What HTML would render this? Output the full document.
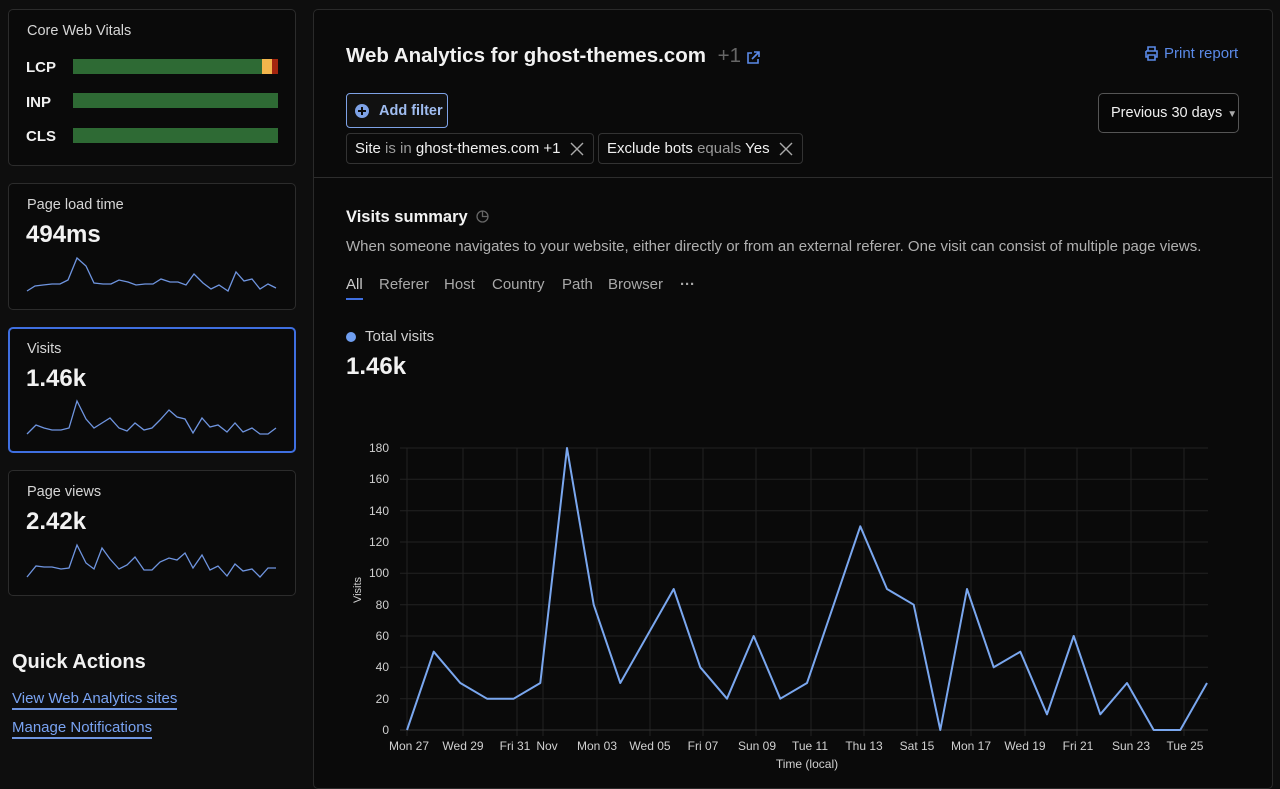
<!DOCTYPE html>
<html><head><meta charset="utf-8"><style>
*{box-sizing:border-box;margin:0;padding:0}
body{width:1280px;height:777px;background:#0e0e0e;font-family:"Liberation Sans",sans-serif;color:#e8e8e8;position:relative;overflow:hidden}
.card{position:absolute;left:8px;width:288px;background:#0a0a0a;border:1px solid #2c2c2c;border-radius:5px}
.lbl{position:absolute;left:18px;font-size:14.5px;color:#d6d6d6}
.big{position:absolute;left:17px;font-size:24px;font-weight:bold;color:#f2f2f2}
.cwv{position:absolute;left:17px;font-size:15px;font-weight:bold;color:#f0f0f0}
.bar{position:absolute;left:64px;width:205px;height:15px;background:#2e6a34}
a{color:#79a3f2;text-decoration:none;border-bottom:2px solid #6f95e0;position:absolute;left:12px;font-size:15px;line-height:18px}
.main{position:absolute;left:313px;top:9px;width:960px;height:780px;background:#0a0a0a;border:1px solid #2a2a2a;border-radius:5px}
.chip{position:absolute;top:133px;height:31px;border:1px solid #333;border-radius:4px;font-size:15px;line-height:30px;padding-left:8px;color:#f0f0f0}
.chip i{font-style:normal;color:#9a9a9a}
.chip svg{position:absolute;top:8px}
.tab{position:absolute;top:276px;font-size:15px;color:#a9a9a9}
</style></head><body>

<div class="card" style="top:9px;height:157px">
 <div class="lbl" style="top:13px">Core Web Vitals</div>
 <div class="cwv" style="top:49px">LCP</div><div class="bar" style="top:49px"><div style="position:absolute;left:189px;width:10px;height:15px;background:#f2b54c"></div><div style="position:absolute;left:199px;width:6px;height:15px;background:#a3250f"></div></div>
 <div class="cwv" style="top:84px">INP</div><div class="bar" style="top:83px"></div>
 <div class="cwv" style="top:118px">CLS</div><div class="bar" style="top:118px"></div>
</div>

<div class="card" style="top:183px;height:127px">
 <div class="lbl" style="top:13px">Page load time</div>
 <div class="big" style="top:37px">494ms</div>
</div>
<div class="card" style="top:327px;height:126px;border:2px solid #3f6fe0">
 <div class="lbl" style="top:12px;left:17px">Visits</div>
 <div class="big" style="top:36px;left:16px">1.46k</div>
</div>
<div class="card" style="top:470px;height:126px">
 <div class="lbl" style="top:13px">Page views</div>
 <div class="big" style="top:37px">2.42k</div>
</div>

<svg style="position:absolute;left:0;top:0" width="310" height="610">
<g fill="none" stroke="#6f95e0" stroke-width="1.3">
<polyline points="27,291 35,286 43,285 52,284 60,284 68,280 77,258 86,266 94,283 103,284 111,284 119,280 128,282 136,285 145,284 153,284 161,279 170,282 178,282 186,285 194,274 203,283 211,289 219,285 228,291 236,272 244,281 252,279 260,289 268,284 276,288"/>
<polyline points="27,434 36,425 44,428 52,430 61,430 69,428 77,401 86,419 94,428 102,423 110,418 119,428 127,431 135,423 144,430 152,428 160,420 169,410 177,417 185,419 193,433 202,418 210,427 218,425 227,432 235,423 243,432 252,428 260,434 268,434 276,428"/>
<polyline points="27,577 36,566 44,567 52,567 61,569 69,568 77,545 86,563 94,569 102,548 110,559 119,569 127,565 135,557 144,570 152,570 160,562 169,558 177,560 185,553 193,568 202,555 210,570 218,566 227,576 235,564 243,571 252,569 260,577 268,568 276,568"/>
</g>
</svg>

<div style="position:absolute;left:12px;top:651px;font-size:20px;font-weight:bold;color:#f2f2f2">Quick Actions</div>
<a style="top:690px">View Web Analytics sites</a>
<a style="top:719px">Manage Notifications</a>

<div class="main"></div>
<div style="position:absolute;left:346px;top:44px;font-size:20.5px;font-weight:bold;color:#f2f2f2">Web Analytics for ghost-themes.com <span style="color:#666;font-weight:normal;margin-left:6px">+1</span></div>
<svg style="position:absolute;left:746px;top:51px" width="14" height="14" fill="none" stroke="#5b8ae8" stroke-width="1.6"><path d="M6 2H2v10h10V8M8 1h5v5M13 1L6 8"/></svg>
<svg style="position:absolute;left:1144px;top:46px" width="15" height="15" fill="none" stroke="#5b8ae8" stroke-width="1.6"><path d="M4 5V1h7v4M2 5h11v6h-2M4 11H2V5M4 9h7v5H4z"/></svg>
<div style="position:absolute;left:1164px;top:45px;font-size:15px;color:#5b8ae8">Print report</div>

<div style="position:absolute;left:346px;top:93px;width:102px;height:35px;border:1.5px solid #7ea2e6;border-radius:4px;background:#111"></div>
<svg style="position:absolute;left:355px;top:104px" width="14" height="14"><circle cx="7" cy="7" r="7" fill="#7ea2e6"/><path d="M7 3v8M3 7h8" stroke="#0a0a0a" stroke-width="2"/></svg>
<div style="position:absolute;left:379px;top:103px;font-size:14.5px;font-weight:bold;color:#9fbcf0">Add filter</div>

<div class="chip" style="left:346px;width:248px">Site <i>is in</i> ghost-themes.com +1<svg style="left:223px" width="14" height="14" stroke="#aaa" stroke-width="1.4"><path d="M1 1l12 12M13 1L1 13"/></svg></div>
<div class="chip" style="left:598px;width:205px">Exclude bots <i>equals</i> Yes<svg style="left:180px" width="14" height="14" stroke="#aaa" stroke-width="1.4"><path d="M1 1l12 12M13 1L1 13"/></svg></div>

<div style="position:absolute;left:1098px;top:93px;width:141px;height:40px;border:1px solid #555;border-radius:5px;background:#070707;font-size:14.5px;line-height:39px;padding-left:12px;color:#f0f0f0">Previous 30 days <span style="font-size:10px;color:#aaa;margin-left:1px">▼</span></div>

<div style="position:absolute;left:314px;top:177px;width:958px;height:1px;background:#2d2d2d"></div>

<div style="position:absolute;left:346px;top:208px;font-size:16.5px;font-weight:bold;color:#f2f2f2">Visits summary</div>
<svg style="position:absolute;left:476px;top:210px" width="13" height="13" fill="none" stroke="#666" stroke-width="1.3"><circle cx="6.5" cy="6.5" r="5.5"/><path d="M6.5 1v5.5H12"/></svg>
<div style="position:absolute;left:346px;top:238px;font-size:15px;color:#b0b0b0;white-space:nowrap">When someone navigates to your website, either directly or from an external referer. One visit can consist of multiple page views.</div>
<div class="tab" style="left:346px;color:#ccc">All</div>
<div style="position:absolute;left:346px;top:298px;width:17px;height:2px;background:#3f6fe0"></div>
<div class="tab" style="left:379px">Referer</div>
<div class="tab" style="left:444px">Host</div>
<div class="tab" style="left:492px">Country</div>
<div class="tab" style="left:562px">Path</div>
<div class="tab" style="left:608px">Browser</div>
<div class="tab" style="left:680px;font-weight:bold">···</div>

<div style="position:absolute;left:346px;top:332px;width:10px;height:10px;border-radius:50%;background:#6f9ef0"></div>
<div style="position:absolute;left:365px;top:328px;font-size:15px;color:#cfcfcf">Total visits</div>
<div style="position:absolute;left:346px;top:353px;font-size:24px;font-weight:bold;color:#f2f2f2">1.46k</div>

<svg style="position:absolute;left:0;top:0" width="1280" height="777" font-family="Liberation Sans, sans-serif">
<g stroke="#222" stroke-width="1">
<line x1="400" x2="1208" y1="448" y2="448"/><line x1="400" x2="1208" y1="479.3" y2="479.3"/><line x1="400" x2="1208" y1="510.7" y2="510.7"/><line x1="400" x2="1208" y1="542" y2="542"/><line x1="400" x2="1208" y1="573.3" y2="573.3"/><line x1="400" x2="1208" y1="604.7" y2="604.7"/><line x1="400" x2="1208" y1="636" y2="636"/><line x1="400" x2="1208" y1="667.3" y2="667.3"/><line x1="400" x2="1208" y1="698.7" y2="698.7"/>
<line x1="407" x2="407" y1="448" y2="736"/><line x1="463" x2="463" y1="448" y2="736"/><line x1="517" x2="517" y1="448" y2="736"/><line x1="543" x2="543" y1="448" y2="736"/><line x1="597" x2="597" y1="448" y2="736"/><line x1="650" x2="650" y1="448" y2="736"/><line x1="703" x2="703" y1="448" y2="736"/><line x1="756" x2="756" y1="448" y2="736"/><line x1="811" x2="811" y1="448" y2="736"/><line x1="864" x2="864" y1="448" y2="736"/><line x1="917" x2="917" y1="448" y2="736"/><line x1="971" x2="971" y1="448" y2="736"/><line x1="1025" x2="1025" y1="448" y2="736"/><line x1="1077" x2="1077" y1="448" y2="736"/><line x1="1131" x2="1131" y1="448" y2="736"/><line x1="1184" x2="1184" y1="448" y2="736"/>
</g>
<line x1="400" x2="1208" y1="730" y2="730" stroke="#333"/>
<g fill="#d0d0d0" font-size="12" text-anchor="end">
<text x="389" y="452">180</text><text x="389" y="483">160</text><text x="389" y="515">140</text><text x="389" y="546">120</text><text x="389" y="577">100</text><text x="389" y="609">80</text><text x="389" y="640">60</text><text x="389" y="671">40</text><text x="389" y="703">20</text><text x="389" y="734">0</text>
</g>
<g fill="#d0d0d0" font-size="12" text-anchor="middle">
<text x="409" y="750">Mon 27</text><text x="463" y="750">Wed 29</text><text x="515" y="750">Fri 31</text><text x="547" y="750">Nov</text><text x="597" y="750">Mon 03</text><text x="650" y="750">Wed 05</text><text x="703" y="750">Fri 07</text><text x="757" y="750">Sun 09</text><text x="810" y="750">Tue 11</text><text x="864" y="750">Thu 13</text><text x="917" y="750">Sat 15</text><text x="971" y="750">Mon 17</text><text x="1025" y="750">Wed 19</text><text x="1078" y="750">Fri 21</text><text x="1131" y="750">Sun 23</text><text x="1185" y="750">Tue 25</text>
<text x="807" y="768">Time (local)</text>
</g>
<text transform="translate(361,590) rotate(-90)" fill="#d0d0d0" font-size="11" text-anchor="middle">Visits</text>
<polyline fill="none" stroke="#7aa7ef" stroke-width="2" stroke-linejoin="round" points="407,730 433.7,651.7 460.3,683 487,698.7 513.7,698.7 540.3,683 567,448 593.7,604.7 620.3,683 647,636 673.7,589 700.3,667.3 727,698.7 753.7,636 780.3,698.7 807,683 833.7,604.7 860.3,526.3 887,589 913.7,604.7 940.3,730 967,589 993.7,667.3 1020.3,651.7 1047,714.3 1073.7,636 1100.3,714.3 1127,683 1153.7,730 1180.3,730 1207,683"/>
</svg>
</body></html>
